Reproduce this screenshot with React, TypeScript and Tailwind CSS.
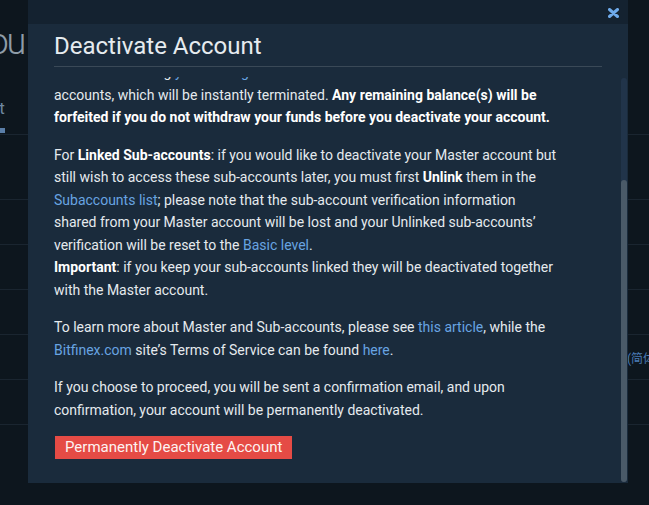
const ROWS = [65, 45, 45, 45, 45, 45] as const;

function Backdrop() {
    return (
        <div className="flex h-full flex-col">
            <div className="flex h-[135px] flex-col border-b border-[#1a2530]">
                <div className="-ml-[30px] mt-[20px] text-[36px] font-light leading-[44px] tracking-[-2px] text-[#8e9ca8]">
                    You
                </div>
                <div className="mt-[33px] flex">
                    <div className="-ml-[58px] flex flex-col">
                        <span className="text-[17px] leading-[22px] text-[#6d86a0]">Account</span>
                        <span className="mt-[9px] h-[5px] bg-[#5a7ea8]" />
                    </div>
                </div>
            </div>
            {ROWS.map((h, i) => (
                <div
                    key={i}
                    className="flex items-center border-b border-[#1a2530]"
                    style={{ height: h }}
                >
                    <div className="flex-1" />
                    <div className="w-[22px] overflow-hidden whitespace-nowrap pt-[4px] font-['Roboto','Noto_Sans_CJK_SC',sans-serif] text-[12px] text-[#4b7bb5]">
                        {i === 4 ? "(简体中文)" : ""}
                    </div>
                </div>
            ))}
        </div>
    );
}

function A({ children }: { children: React.ReactNode }) {
    return <a className="text-[#68a4e2]">{children}</a>;
}

export default function App() {
    return (
        <div className="relative h-[505px] w-full overflow-hidden bg-[#0d161e] font-['Roboto',sans-serif]">
            <Backdrop />

            <div className="absolute left-[28px] top-0 flex h-[483px] w-[600px] flex-col bg-[#1a2b3c]">
                <div className="flex h-[24px] items-center justify-end bg-[#142230] pr-[9px] pt-[2px]">
                    <svg width="11" height="10" viewBox="0 0 11 10">
                        <path d="M1.5 1.5 L9.5 8.5 M9.5 1.5 L1.5 8.5" stroke="#6eaaea" strokeWidth="3" strokeLinecap="round" />
                    </svg>
                </div>

                <div className="px-[26px]">
                    <h2 className="mt-[6px] text-[24px] leading-[32px] text-[#e6ebef]">Deactivate Account</h2>
                    <div className="mt-[4px] h-px bg-[#3a4957]" />
                </div>

                <div className="mt-[10px] flex min-h-0 flex-1">
                    <div className="flex min-w-0 flex-1 flex-col justify-end overflow-hidden pb-[24px] pl-[26px]">
                        <div className="w-[504px] shrink-0 text-[14px] leading-[22.5px] text-[#e5eaee]">
                            <p className="mb-[15px]">
                                Deactivating your account will also deactivate all of your linked and unlinked sub-accounts
                                including <A>your trading sub-</A>
                                <br />
                                accounts, which will be instantly terminated.{" "}
                                <b className="font-bold text-white">
                                    Any remaining balance(s) will be forfeited if you do not withdraw your funds before you
                                    deactivate your account.
                                </b>
                            </p>
                            <p className="mb-[15px]">
                                For <b className="font-bold text-white">Linked Sub-accounts</b>: if you would like to
                                deactivate your Master account but still wish to access these sub-accounts later, you must
                                first <b className="font-bold text-white">Unlink</b> them in the <A>Subaccounts list</A>;
                                please note that the sub-account verification information shared from your Master account
                                will be lost and your Unlinked sub-accounts’ verification will be reset to the{" "}
                                <A>Basic level</A>.
                                <br />
                                <b className="font-bold text-white">Important</b>: if you keep your sub-accounts linked they
                                will be deactivated together with the Master account.
                            </p>
                            <p className="mb-[15px]">
                                To learn more about Master and Sub-accounts, please see <A>this article</A>, while the{" "}
                                <A>Bitfinex.com</A> site’s Terms of Service can be found <A>here</A>.
                            </p>
                            <p className="mb-[15px]">
                                If you choose to proceed, you will be sent a confirmation email, and upon confirmation, your
                                account will be permanently deactivated.
                            </p>
                            <button className="ml-px h-[23px] bg-[#e54b45] px-[10px] text-[15px] leading-[23px] text-[#fdf3f2]">
                                Permanently Deactivate Account
                            </button>
                        </div>
                    </div>
                    <div className="mb-px mr-px mt-px flex w-[6px] flex-col justify-end rounded-full bg-[#21344a]">
                        <div className="h-[302px] rounded-full bg-[#4a5a68]" />
                    </div>
                </div>
            </div>
        </div>
    );
}
